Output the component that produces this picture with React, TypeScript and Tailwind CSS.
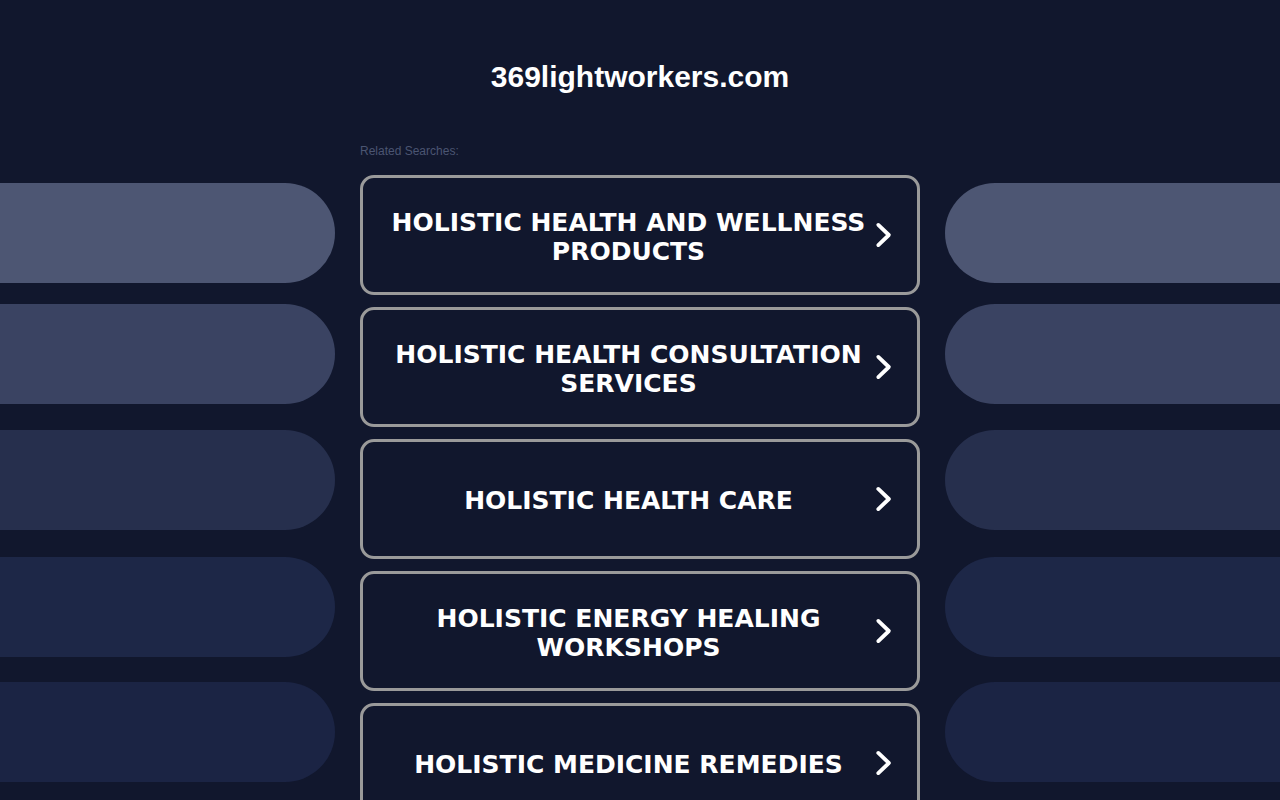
import React from 'react';

const searches = [
  'HOLISTIC HEALTH AND WELLNESS PRODUCTS',
  'HOLISTIC HEALTH CONSULTATION SERVICES',
  'HOLISTIC HEALTH CARE',
  'HOLISTIC ENERGY HEALING WORKSHOPS',
  'HOLISTIC MEDICINE REMEDIES',
];

// side decoration pills, top margin + colour
const pills = [
  { mt: 'mt-0', bg: 'bg-[#4d5673]' },
  { mt: 'mt-[21px]', bg: 'bg-[#3a4362]' },
  { mt: 'mt-[26px]', bg: 'bg-[#262f4d]' },
  { mt: 'mt-[27px]', bg: 'bg-[#1d2747]' },
  { mt: 'mt-[25px]', bg: 'bg-[#1b2444]' },
];

function Chevron() {
  return (
    <svg width="24" height="30" viewBox="0 0 24 30" fill="none">
      <path
        d="M4.5 4.5 L15.5 15 L4.5 25.5"
        stroke="white"
        strokeWidth="4"
        strokeLinecap="round"
        strokeLinejoin="round"
      />
    </svg>
  );
}

function SidePills({ side }: { side: 'left' | 'right' }) {
  return (
    <div className="w-[335px] shrink-0 pt-[43px] flex flex-col">
      {pills.map((p, i) => (
        <div
          key={i}
          className={`${p.mt} ${p.bg} h-[100px] ${side === 'left' ? 'rounded-r-full' : 'rounded-l-full'}`}
        />
      ))}
    </div>
  );
}

export default function App() {
  return (
    <div className="h-[800px] overflow-hidden bg-[#11172d] font-['Liberation_Sans',Arial,sans-serif]">
      <div className="h-[140px] pt-[60px] text-center">
        <h1 className="text-[30px] leading-[34px] font-bold text-white">369lightworkers.com</h1>
      </div>

      <div className="flex gap-[25px]">
        <SidePills side="left" />

        <div className="w-[560px] shrink-0">
          <div className="pt-[4px] pb-[17px] text-[12px] leading-[14px] text-[#4b5572]">Related Searches:</div>
          <div className="flex flex-col gap-[12px]">
            {searches.map((s) => (
              <a
                key={s}
                href="#"
                className="h-[120px] flex items-center border-[3px] border-[#9a9a9a] rounded-[14px] px-[20px]"
              >
                <span className="flex-1 pt-[3px] text-center text-white font-bold text-[25px] leading-[29px] font-['DejaVu_Sans',Verdana,sans-serif]">
                  {s}
                </span>
                <span className="w-[23px] flex justify-center">
                  <Chevron />
                </span>
              </a>
            ))}
          </div>
        </div>

        <SidePills side="right" />
      </div>
    </div>
  );
}
